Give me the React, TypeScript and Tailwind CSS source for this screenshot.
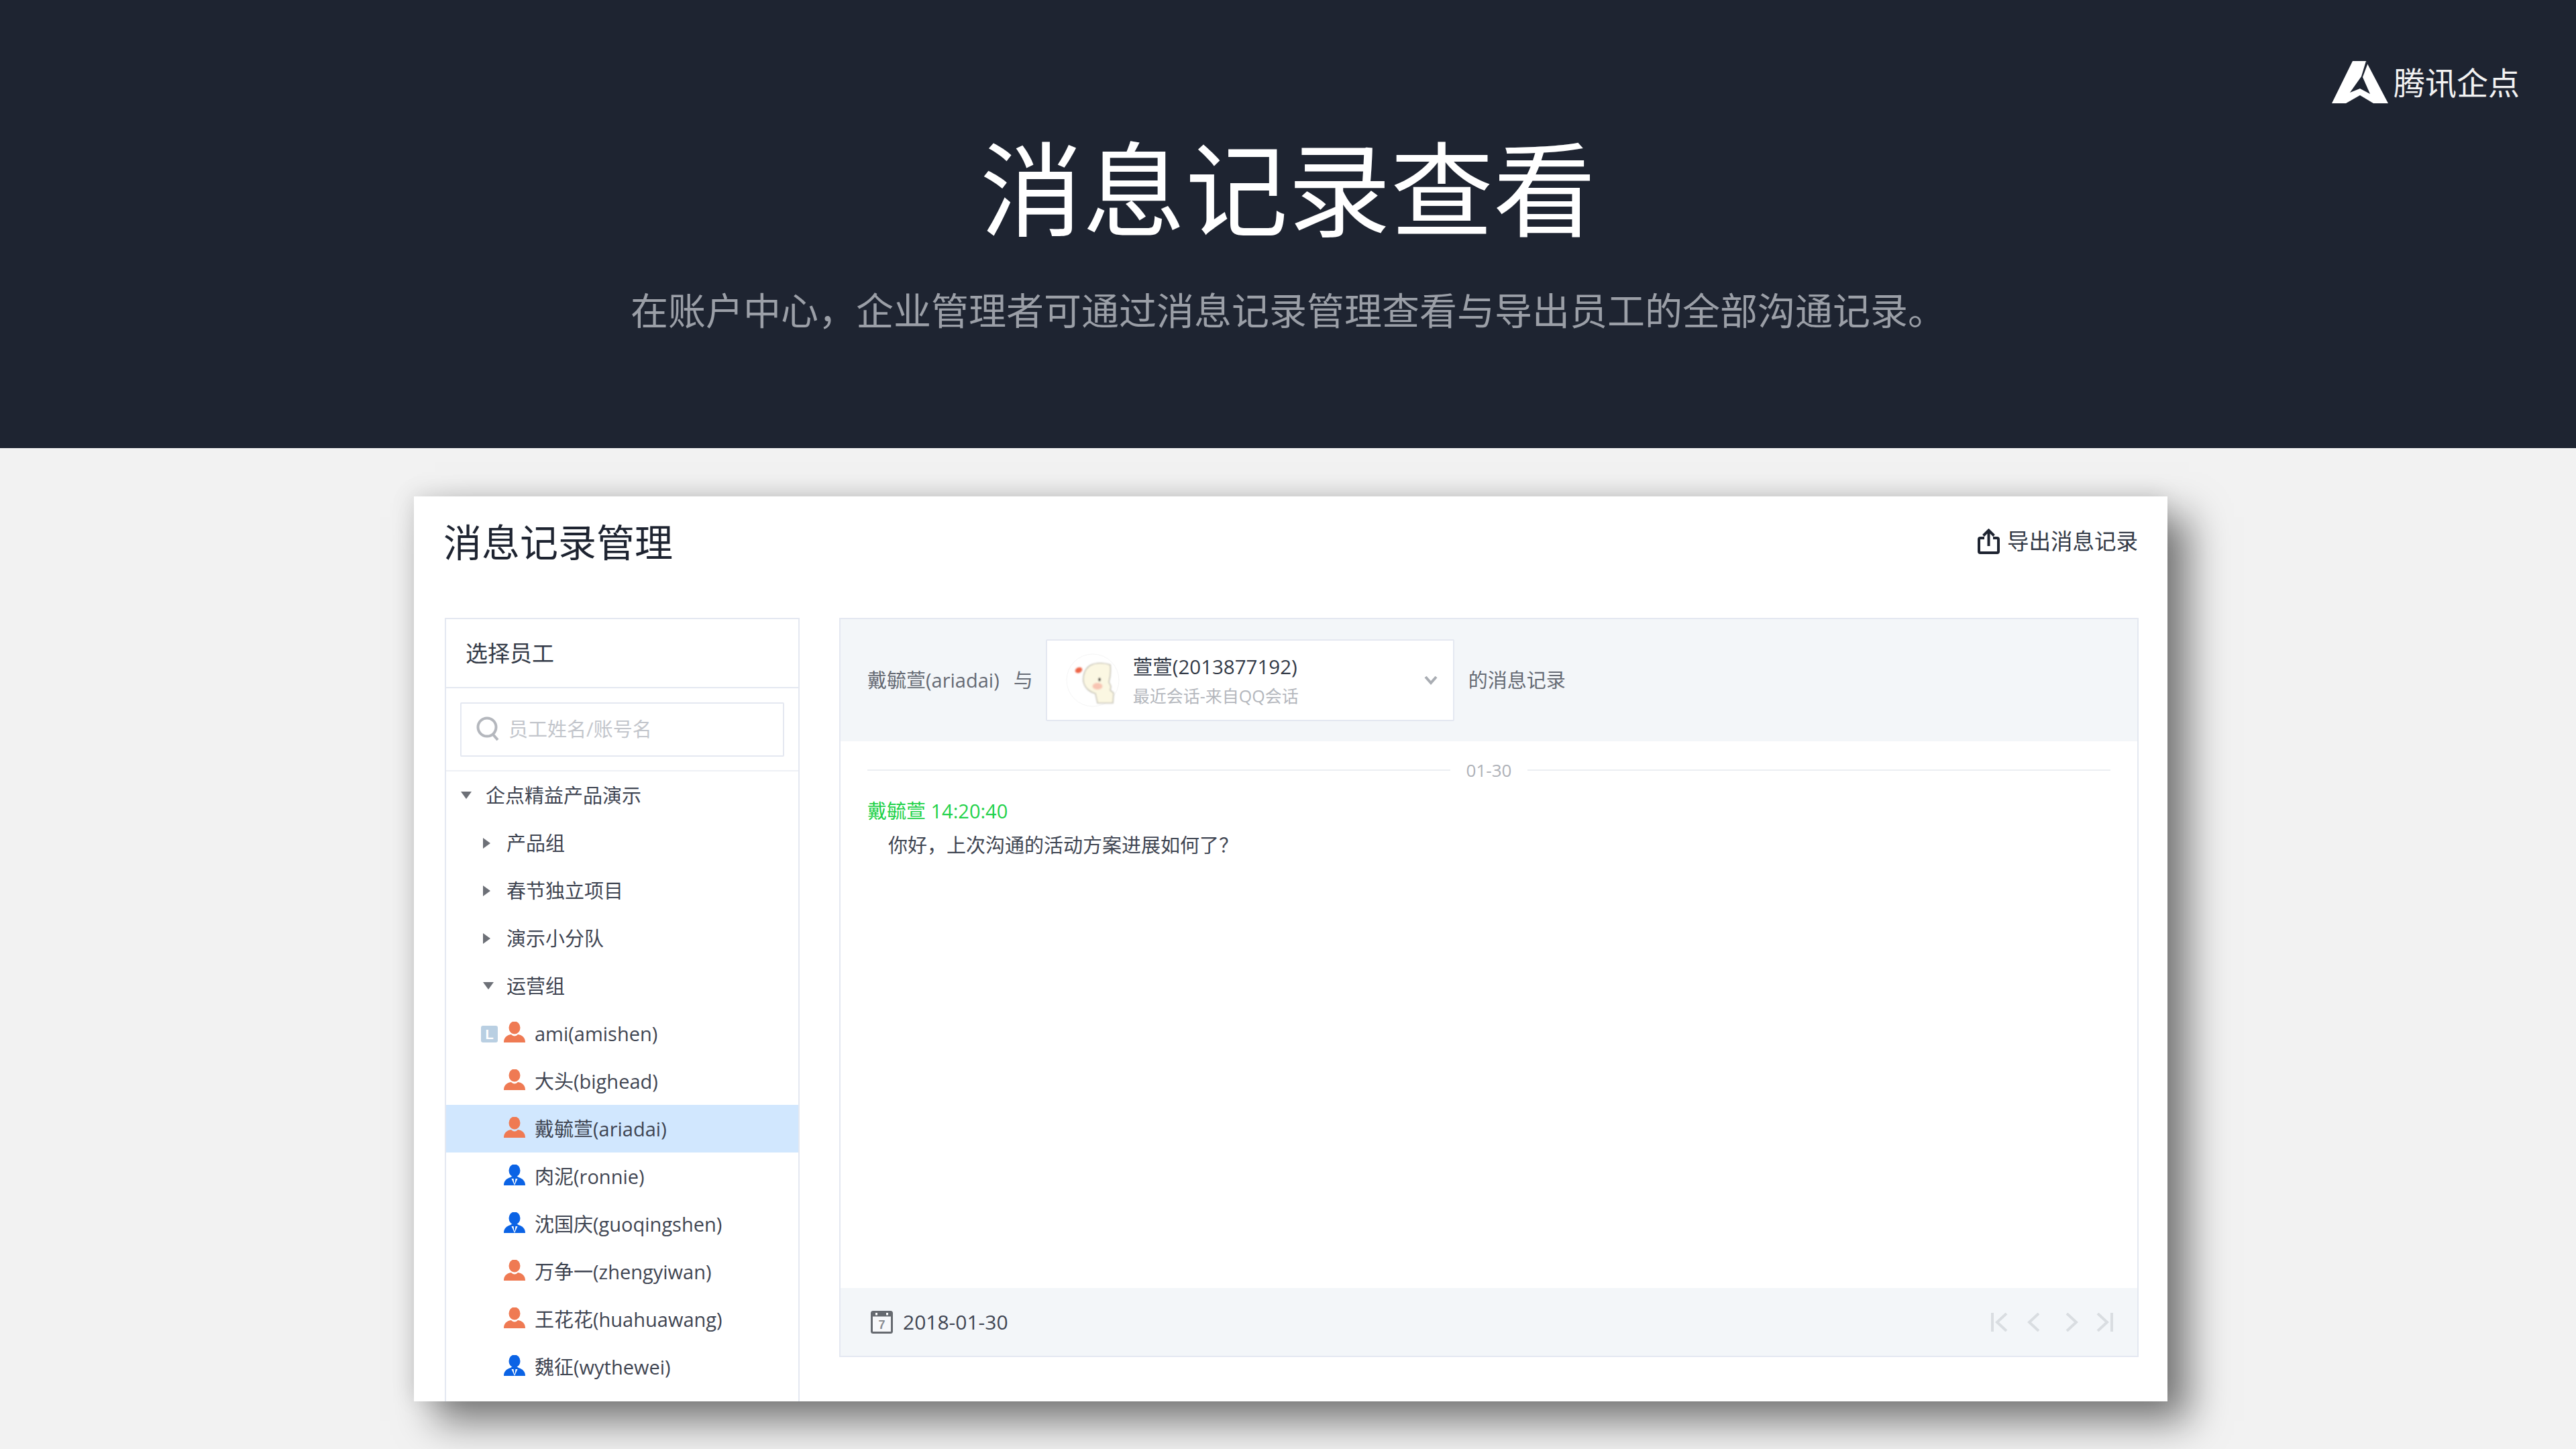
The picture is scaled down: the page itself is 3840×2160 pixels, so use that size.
import React from "react";

function Logo() {
  return (
    <svg width="84" height="63" viewBox="0 0 84 63" className="shrink-0">
      <path d="M0 63 L31 0 H51 L53 4 L84 63 H62 L42 51 L21 63 Z" fill="#ffffff" />
      <path d="M51 0 L53.5 4 L46 24 L57 49 L42 41 L27 47 L44 23 Z" fill="#1e2431" />
    </svg>
  );
}

function Person({ blue }: { blue?: boolean }) {
  if (blue) {
    return (
      <svg width="32" height="32" viewBox="0 0 32 32" className="shrink-0">
        <ellipse cx="16" cy="9" rx="8.5" ry="9.5" fill="#0b63e5" />
        <path d="M0 31 C0 24 4 21 10 19 L13 17 H19 L22 19 C28 21 32 24 32 31 Z" fill="#0b63e5" />
        <path d="M11.5 21 H20.5 L16 31 Z" fill="#ffffff" />
        <path d="M14.5 21 H17.5 L16.8 26 L16 29 L15.2 26 Z" fill="#0b63e5" />
      </svg>
    );
  }
  return (
    <svg width="32" height="32" viewBox="0 0 32 32" className="shrink-0">
      <ellipse cx="16" cy="9" rx="8.5" ry="9.5" fill="#ef7a53" />
      <path d="M0 31 C0 24 4 20 11 19 Q16 24 21 19 C28 20 32 24 32 31 Z" fill="#ef7a53" />
    </svg>
  );
}

function Caret({ open }: { open?: boolean }) {
  return open ? (
    <svg width="16" height="11" viewBox="0 0 16 11" className="shrink-0">
      <path d="M0 0 H16 L8 11 Z" fill="#6d7077" />
    </svg>
  ) : (
    <svg width="11" height="16" viewBox="0 0 11 16" className="shrink-0">
      <path d="M0 0 L11 8 L0 16 Z" fill="#6d7077" />
    </svg>
  );
}

function GroupRow({ label, open, top }: { label: string; open?: boolean; top?: boolean }) {
  return (
    <div className={top ? "flex h-[71px] items-center pl-[22px]" : "flex h-[71px] items-center pl-[55px]"}>
      <div className={top ? "flex w-[37px] shrink-0 items-center" : "flex w-[35px] shrink-0 items-center"}>
        <Caret open={open} />
      </div>
      <span>{label}</span>
    </div>
  );
}

function UserRow({ label, blue, lead, active }: { label: string; blue?: boolean; lead?: boolean; active?: boolean }) {
  return (
    <div className={active ? "relative flex h-[71px] items-center bg-[#d1e7fe] pl-[86px]" : "relative flex h-[71px] items-center pl-[86px]"}>
      {lead && (
        <span className="absolute left-[52px] top-[24px] flex h-[25px] w-[25px] items-center justify-center rounded-[3px] bg-[#b9cfe2] font-['Liberation_Sans',sans-serif] text-[20px] font-bold leading-none text-white">
          L
        </span>
      )}
      <div className="mb-[4px] w-[46px] shrink-0">
        <Person blue={blue} />
      </div>
      <span>{label}</span>
    </div>
  );
}

function Bunny() {
  return (
    <svg width="80" height="80" viewBox="10 7 80 80" className="shrink-0">
      <defs>
        <filter id="soft" x="-20%" y="-20%" width="140%" height="140%">
          <feGaussianBlur stdDeviation="0.8" />
        </filter>
      </defs>
      <circle cx="50" cy="47" r="39" fill="#ffffff" stroke="#f5f5f5" strokeWidth="1" />
      <g filter="url(#soft)">
        <path
          d="M76 24 C68 21 55 20 46 25 C38 30 35 40 36 49 C38 59 46 65 54 67 L57 81 L80 81 L81 66 L76 62 L77 56 L74 50 C76 42 77 32 76 24 Z"
          fill="#fbf7e2"
          stroke="#aaa699"
          strokeWidth="1.1"
        />
        <ellipse cx="57" cy="56" rx="7.5" ry="5" fill="#f8c4b2" />
        <ellipse cx="60" cy="46" rx="1.8" ry="2.8" fill="#3b3633" />
        <ellipse cx="29" cy="32" rx="5.5" ry="4" fill="#ee664a" transform="rotate(-25 29 32)" />
      </g>
    </svg>
  );
}

export default function App() {
  return (
    <div className="flex h-[2160px] w-[3840px] flex-col overflow-hidden bg-[#f2f2f2] font-['Open_Sans','Noto_Sans_CJK_SC',sans-serif] text-[#3b4250]">
      <header className="relative flex h-[668px] shrink-0 flex-col items-center bg-[#1e2431]">
        <div className="absolute right-[84px] top-[91px] flex items-start gap-[8px]">
          <Logo />
          <span className="mt-[-1px] text-[47px] leading-[62px] font-['Noto_Sans_CJK_SC',sans-serif] text-[#f2f2f2]">腾讯企点</span>
        </div>
        <h1 className="mt-[178px] text-[153px] font-normal leading-[208px] text-white">消息记录查看</h1>
        <p className="mt-[36px] text-[56px] font-normal leading-[80px] text-[#9b9fa7]">在账户中心，企业管理者可通过消息记录管理查看与导出员工的全部沟通记录。</p>
      </header>

      <main className="pl-[617px] pt-[72px]">
        <section className="h-[1349px] w-[2614px] overflow-hidden bg-white pl-[46px] pr-[42px] shadow-[32px_30px_55px_rgba(0,0,0,0.5),-4px_-4px_30px_rgba(0,0,0,0.1)]">
          <div className="flex h-[181px] items-start justify-between">
            <h2 className="ml-[-2px] mt-[28px] text-[57px] leading-[80px] text-[#1e2431]">消息记录管理</h2>
            <div className="mr-[2px] mt-[44px] flex items-center gap-[11px] text-[32.5px] leading-[46px] text-[#333a47]">
              <svg width="33" height="38" viewBox="0 0 33 38" fill="none" stroke="#1e2431" strokeWidth="4">
                <path d="M10 14 H4 Q2 14 2 16 V34 Q2 36 4 36 H29 Q31 36 31 34 V16 Q31 14 29 14 H23" />
                <path d="M16.5 26 V3 M8.5 10.5 L16.5 2.5 L24.5 10.5" />
              </svg>
              <span>导出消息记录</span>
            </div>
          </div>

          <div className="flex gap-[59px]">
            <aside className="h-[1200px] w-[529px] shrink-0 border-2 border-[#e4e8f1] text-[29px] text-[#3f4552]">
              <div className="flex h-[103px] items-center border-b-2 border-[#e4e8f1] pl-[29px] text-[33px] text-[#333a47]">选择员工</div>
              <div className="flex h-[124px] items-center border-b-2 border-[#eef0f5] px-[21px]">
                <div className="flex h-[81px] w-full items-center gap-[14px] rounded-[2px] border-2 border-[#e4e8f1] pl-[22px] text-[29px] text-[#c3c6cc]">
                  <svg width="34" height="38" viewBox="0 0 34 38" fill="none" stroke="#b4b7bd" strokeWidth="4">
                    <circle cx="16" cy="16" r="13.5" />
                    <path d="M25 27 L32 35" />
                  </svg>
                  <span>员工姓名/账号名</span>
                </div>
              </div>
              <GroupRow label="企点精益产品演示" open top />
              <GroupRow label="产品组" />
              <GroupRow label="春节独立项目" />
              <GroupRow label="演示小分队" />
              <GroupRow label="运营组" open />
              <UserRow label="ami(amishen)" lead />
              <UserRow label="大头(bighead)" />
              <UserRow label="戴毓萱(ariadai)" active />
              <UserRow label="肉泥(ronnie)" blue />
              <UserRow label="沈国庆(guoqingshen)" blue />
              <UserRow label="万争一(zhengyiwan)" />
              <UserRow label="王花花(huahuawang)" />
              <UserRow label="魏征(wythewei)" blue />
            </aside>

            <div className="flex h-[1102px] w-[1937px] shrink-0 flex-col border-2 border-[#e4e8f1]">
              <div className="flex h-[182px] shrink-0 items-center bg-[#f3f6f9] pl-[40px] text-[29px] text-[#666b75]">
                <span>戴毓萱(ariadai)</span>
                <span className="ml-[21px]">与</span>
                <div className="ml-[19px] flex h-[122px] w-[609px] shrink-0 items-center rounded-[2px] border-2 border-[#e4e8f1] bg-white pl-[28px] pr-[23px]">
                  <Bunny />
                  <div className="ml-[20px] flex flex-col">
                    <span className="text-[29.5px] leading-[42px] text-[#333a47]">萱萱(2013877192)</span>
                    <span className="mt-[5px] text-[25px] leading-[35px] text-[#b4b7bd]">最近会话-来自QQ会话</span>
                  </div>
                  <svg width="20" height="14" viewBox="0 0 20 14" fill="none" stroke="#a9adb3" strokeWidth="4" className="ml-auto">
                    <path d="M2 2 L10 11 L18 2" />
                  </svg>
                </div>
                <span className="ml-[21px]">的消息记录</span>
              </div>

              <div className="flex-1 px-[40px]">
                <div className="mt-[23px] flex h-[40px] items-center gap-[24px] text-[26px] text-[#aeb1b7]">
                  <div className="h-[2px] flex-1 bg-[#eceef2]" />
                  <span>01-30</span>
                  <div className="h-[2px] flex-1 bg-[#eceef2]" />
                </div>
                <div className="mt-[20px] text-[29px] leading-[42px] text-[#1fd24a]">戴毓萱 14:20:40</div>
                <div className="mt-[9px] pl-[31px] text-[29px] leading-[42px] text-[#3f4552]">你好，上次沟通的活动方案进展如何了？</div>
              </div>

              <div className="flex h-[101px] shrink-0 items-center justify-between bg-[#f3f6f9] pl-[45px] pr-[36px]">
                <div className="flex items-center gap-[15px] text-[30px] text-[#3f4552]">
                  <svg width="33" height="34" viewBox="0 0 33 34" className="shrink-0">
                    <rect x="1.5" y="1.5" width="30" height="31" rx="2" fill="#f7f8fa" stroke="#666a70" strokeWidth="3" />
                    <rect x="1.5" y="1.5" width="30" height="7" fill="#666a70" />
                    <rect x="7" y="3" width="3" height="3.5" fill="#ffffff" />
                    <rect x="23" y="3" width="3" height="3.5" fill="#ffffff" />
                    <text x="16.5" y="27" textAnchor="middle" fontSize="18" fontWeight="700" fontFamily="Liberation Sans, sans-serif" fill="#8a8d92">7</text>
                  </svg>
                  <span>2018-01-30</span>
                </div>
                <div className="flex items-center">
                  <svg width="182" height="28" viewBox="0 0 182 28" fill="none" stroke="#d9dde1" strokeWidth="4">
                    <path d="M2 0 V28 M23 1 L9 14 L23 27" />
                    <path d="M71 1 L57 14 L71 27" />
                    <path d="M113 1 L127 14 L113 27" />
                    <path d="M159 1 L173 14 L159 27 M180 0 V28" />
                  </svg>
                </div>
              </div>
            </div>
          </div>
        </section>
      </main>
    </div>
  );
}
